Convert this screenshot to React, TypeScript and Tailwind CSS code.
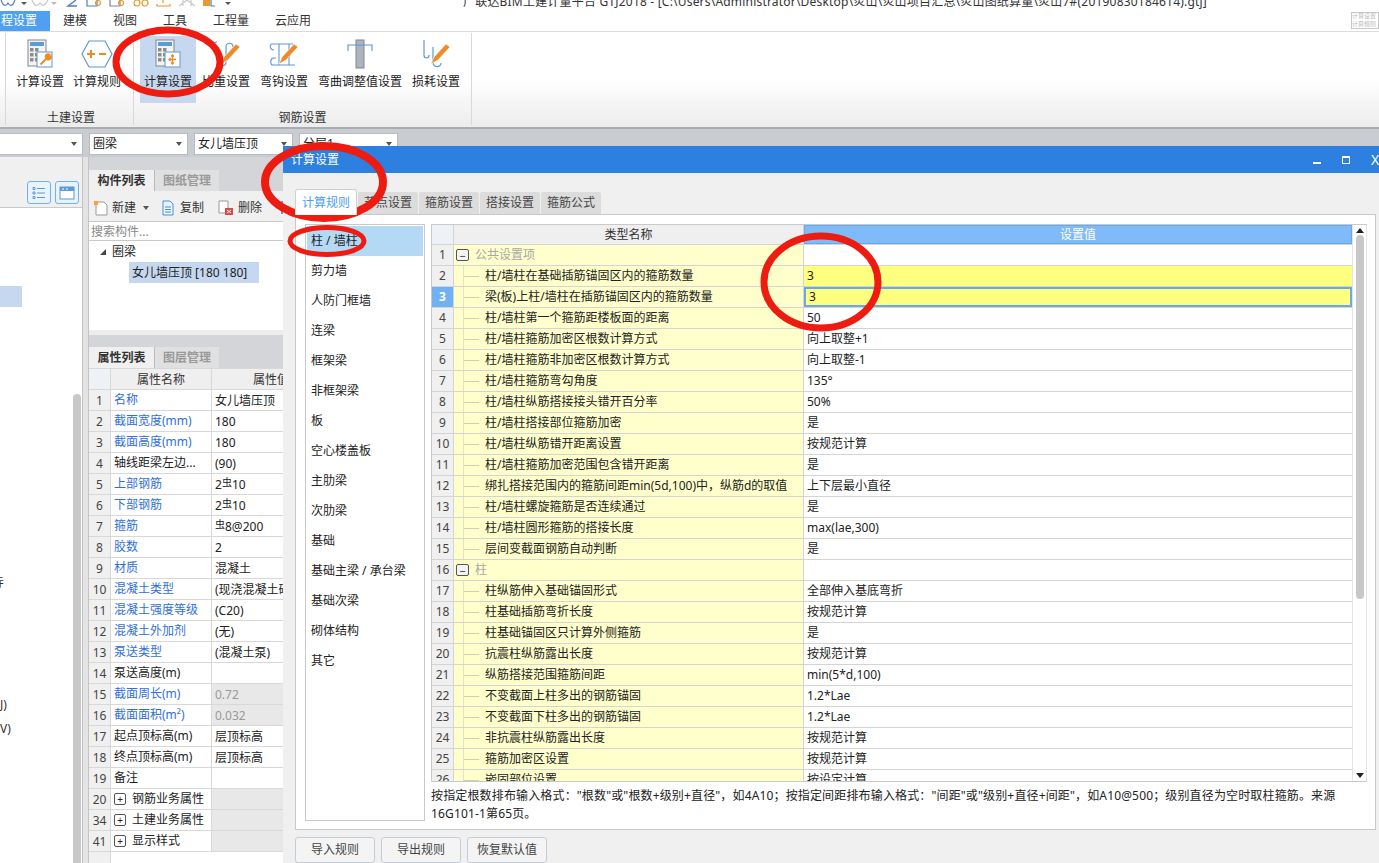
const menus = [
  { name: "建模", w: "w-[50px]" },
  { name: "视图", w: "w-[50px]" },
  { name: "工具", w: "w-[50px]" },
  { name: "工程量", w: "w-[62px]" },
  { name: "云应用", w: "w-[62px]" },
];

const props: { no: number; name: string; value: string; blue?: boolean; gray?: boolean; expand?: boolean; rebar?: string }[] = [
  { no: 1, name: "名称", value: "女儿墙压顶", blue: true },
  { no: 2, name: "截面宽度(mm)", value: "180", blue: true },
  { no: 3, name: "截面高度(mm)", value: "180", blue: true },
  { no: 4, name: "轴线距梁左边...", value: "(90)" },
  { no: 5, name: "上部钢筋", value: "10", blue: true, rebar: "2" },
  { no: 6, name: "下部钢筋", value: "10", blue: true, rebar: "2" },
  { no: 7, name: "箍筋", value: "8@200", blue: true, rebar: " " },
  { no: 8, name: "胶数", value: "2", blue: true },
  { no: 9, name: "材质", value: "混凝土", blue: true },
  { no: 10, name: "混凝土类型", value: "(现浇混凝土碎石", blue: true },
  { no: 11, name: "混凝土强度等级", value: "(C20)", blue: true },
  { no: 12, name: "混凝土外加剂", value: "(无)", blue: true },
  { no: 13, name: "泵送类型", value: "(混凝土泵)", blue: true },
  { no: 14, name: "泵送高度(m)", value: "" },
  { no: 15, name: "截面周长(m)", value: "0.72", blue: true, gray: true },
  { no: 16, name: "截面面积(m²)", value: "0.032", blue: true, gray: true },
  { no: 17, name: "起点顶标高(m)", value: "层顶标高" },
  { no: 18, name: "终点顶标高(m)", value: "层顶标高" },
  { no: 19, name: "备注", value: "" },
  { no: 20, name: "钢筋业务属性", value: "", expand: true, gray: true },
  { no: 34, name: "土建业务属性", value: "", expand: true, gray: true },
  { no: 41, name: "显示样式", value: "", expand: true, gray: true },
];

const categories = ["柱 / 墙柱", "剪力墙", "人防门框墙", "连梁", "框架梁", "非框架梁", "板", "空心楼盖板", "主肋梁", "次肋梁", "基础", "基础主梁 / 承台梁", "基础次梁", "砌体结构", "其它"];

const rules: { name: string; value: string; group?: boolean }[] = [
  { name: "公共设置项", value: "", group: true },
  { name: "柱/墙柱在基础插筋锚固区内的箍筋数量", value: "3" },
  { name: "梁(板)上柱/墙柱在插筋锚固区内的箍筋数量", value: "3" },
  { name: "柱/墙柱第一个箍筋距楼板面的距离", value: "50" },
  { name: "柱/墙柱箍筋加密区根数计算方式", value: "向上取整+1" },
  { name: "柱/墙柱箍筋非加密区根数计算方式", value: "向上取整-1" },
  { name: "柱/墙柱箍筋弯勾角度", value: "135°" },
  { name: "柱/墙柱纵筋搭接接头错开百分率", value: "50%" },
  { name: "柱/墙柱搭接部位箍筋加密", value: "是" },
  { name: "柱/墙柱纵筋错开距离设置", value: "按规范计算" },
  { name: "柱/墙柱箍筋加密范围包含错开距离", value: "是" },
  { name: "绑扎搭接范围内的箍筋间距min(5d,100)中，纵筋d的取值", value: "上下层最小直径" },
  { name: "柱/墙柱螺旋箍筋是否连续通过", value: "是" },
  { name: "柱/墙柱圆形箍筋的搭接长度", value: "max(lae,300)" },
  { name: "层间变截面钢筋自动判断", value: "是" },
  { name: "柱", value: "", group: true },
  { name: "柱纵筋伸入基础锚固形式", value: "全部伸入基底弯折" },
  { name: "柱基础插筋弯折长度", value: "按规范计算" },
  { name: "柱基础锚固区只计算外侧箍筋", value: "是" },
  { name: "抗震柱纵筋露出长度", value: "按规范计算" },
  { name: "纵筋搭接范围箍筋间距", value: "min(5*d,100)" },
  { name: "不变截面上柱多出的钢筋锚固", value: "1.2*Lae" },
  { name: "不变截面下柱多出的钢筋锚固", value: "1.2*Lae" },
  { name: "非抗震柱纵筋露出长度", value: "按规范计算" },
  { name: "箍筋加密区设置", value: "按规范计算" },
  { name: "嵌固部位设置", value: "按设定计算" },
];

function QuickAccess() {
  return (
    <svg width="240" height="11" viewBox="0 0 240 11" fill="none" className="shrink-0">
      <path d="M1 0c2 6 5 7 7 3 2 4 5 3 7-3" stroke="#5a83b8" strokeWidth="1.2" />
      <path d="M21 2l3 3 3-3z" fill="#555" />
      <path d="M32 0c2 6 5 7 8 3 2 4 5 3 8-3" stroke="#c9c9c9" strokeWidth="1.2" />
      <path d="M51 2l3 3 3-3z" fill="#bbb" />
      <path d="M76 0l-8 6h9" stroke="#4a7fc4" strokeWidth="1.4" />
      <path d="M87 0v6h10V0" stroke="#4a7fc4" strokeWidth="1.2" />
      <circle cx="98" cy="3" r="2.500" stroke="#e8982e" strokeWidth="1.2" />
      <path d="M110 0v6h10V0" stroke="#7d8794" strokeWidth="1.2" />
      <circle cx="121" cy="3" r="2.500" stroke="#e8982e" strokeWidth="1.2" />
      <circle cx="137" cy="3" r="3" stroke="#e8982e" strokeWidth="1.2" />
      <circle cx="145" cy="3" r="3" stroke="#e8982e" strokeWidth="1.2" />
      <path d="M163 0v3M157 4v2h13V4" stroke="#e8982e" strokeWidth="1.2" />
      <path d="M179 6l8-6 8 6M183 0v6M191 0v6" stroke="#c9c9c9" strokeWidth="1.2" />
      <rect x="203" y="0" width="7" height="6" fill="#e8982e" />
      <path d="M211 0v6h4" stroke="#4a7fc4" strokeWidth="1.2" />
      <path d="M225 2l3 3 3-3z" fill="#555" />
    </svg>
  );
}

function CalcIcon({ badge }: { badge: "wrench" | "arrows" }) {
  return (
    <svg width="26" height="30" viewBox="0 0 26 30">
      <rect x="1" y="1" width="18" height="26" fill="#f4f4f4" stroke="#7d8794" />
      <rect x="3" y="3" width="14" height="4" fill="#5d9ad8" />
      {[9, 14, 19].map((y) => (
        <g key={y} fill="#8c8c8c">
          <rect x="3" y={y} width="3.500" height="3.500" />
          <rect x="8" y={y} width="3.500" height="3.500" />
        </g>
      ))}
      <rect x="10" y="13" width="15" height="15" fill="#fff" stroke="#5d9ad8" />
      {badge === "wrench" ? (
        <path d="M13.500 25.500l6-6M18.500 17.500c0-2 2.500-3 4-2l-2 2 1.500 1.500 2-2c.5 2-1 4-3.500 3.500z" stroke="#ee8a22" strokeWidth="1.800" fill="#ee8a22" />
      ) : (
        <g fill="none" stroke="#ee8a22" strokeWidth="1.300">
          <path d="M17.500 16v9M14 20.500h7" />
          <path d="M16 17.500l1.500-1.500 1.500 1.500M16 23.500l1.500 1.500 1.500-1.500M15.500 19l-1.500 1.500 1.500 1.500" />
        </g>
      )}
    </svg>
  );
}

function RuleIcon() {
  return (
    <svg width="32" height="30" viewBox="0 0 32 30">
      <path d="M8 2h16l7 13-7 13H8L1 15z" fill="#fff" stroke="#5d9ad8" strokeWidth="1.200" />
      <path d="M6 15h8M10 11v8" stroke="#ee8a22" strokeWidth="2" />
      <path d="M18 15h7" stroke="#ee8a22" strokeWidth="2" />
    </svg>
  );
}

function Pencil() {
  return <path d="M10 25l3-7 12-13 4 3-12 13z" fill="#ef8a2c" stroke="#fff" strokeWidth="0.600" />;
}

function RatioIcon() {
  return (
    <svg width="30" height="30" viewBox="0 0 30 30">
      <path d="M6 3c-4 0-4 6 0 6h1v14c0 5 8 5 8 0V8c0-5 7-5 7 0" fill="none" stroke="#5d9ad8" strokeWidth="1.200" />
      <Pencil />
    </svg>
  );
}

function HookIcon() {
  return (
    <svg width="30" height="30" viewBox="0 0 30 30">
      <path d="M2 5h22M2 5c-2 3 0 6 3 6M4 26h22M4 26c-3 0-3-6 0-7h3M10 5v21M20 5v21" fill="none" stroke="#5d9ad8" strokeWidth="1.100" />
      <Pencil />
    </svg>
  );
}

function BendIcon() {
  return (
    <svg width="26" height="30" viewBox="0 0 26 30">
      <rect x="9" y="1" width="8" height="28" fill="#aeb4bb" stroke="#7d8794" />
      <path d="M1 12V6h24v6" fill="none" stroke="#5d9ad8" strokeWidth="1.200" />
    </svg>
  );
}

function LossIcon() {
  return (
    <svg width="30" height="30" viewBox="0 0 30 30">
      <path d="M3 1v15c0 4 5 4 5 0M12 8v15c0 6 8 6 8 1" fill="none" stroke="#5d9ad8" strokeWidth="1.200" />
      <Pencil />
    </svg>
  );
}

function RibbonButton({ label, icon, active, wide }: { label: string; icon: React.ReactNode; active?: boolean; wide?: boolean }) {
  return (
    <div className={`flex h-[67px] shrink-0 flex-col items-center pt-[2px] ${wide ? "w-[92px]" : "w-[56px]"} ${active ? "bg-[#c5d8ef]" : ""}`}>
      <div className="flex h-[31px] items-center">{icon}</div>
      <div className="mt-[5px] whitespace-nowrap text-xs leading-4 text-[#222]">{label}</div>
    </div>
  );
}

function Combo({ text, w }: { text: string; w: string }) {
  return (
    <div className={`flex h-[22px] shrink-0 items-center justify-between border border-[#b8bcc2] bg-white pl-[3px] pr-[5px] text-xs text-[#222] ${w}`}>
      <span>{text}</span>
      <span className="h-0 w-0 border-x-[3.5px] border-t-[4px] border-x-transparent border-t-[#555]" />
    </div>
  );
}

function PropertyRow({ row }: { row: (typeof props)[number] }) {
  return (
    <div className="flex h-[21px] shrink-0 border-b border-[#d8d8d8] text-xs leading-[22px]">
      <div className="w-[22px] shrink-0 border-r border-[#d8d8d8] bg-[#f0f0f0] text-center text-[#444]">{row.no}</div>
      <div className={`flex w-[101px] shrink-0 items-center border-r border-[#d8d8d8] bg-white pl-[3px] ${row.blue ? "text-[#2f6fdc]" : "text-[#222]"}`}>
        {row.expand && <span className="mr-[6px] flex h-3 w-3 items-center justify-center rounded-[2px] border border-[#555] text-[10px] leading-none">+</span>}
        {row.name}
      </div>
      <div className={`flex-1 overflow-hidden whitespace-nowrap pl-[3px] ${row.gray ? "bg-[#e8e8e8] text-[#999]" : "bg-white text-[#222]"}`}>
        {row.rebar !== undefined && (
          <>
            {row.rebar}
            <span className="relative top-[-3px] text-[10px]">虫</span>
          </>
        )}
        {row.value}
      </div>
    </div>
  );
}

function RuleRow({ no, rule }: { no: number; rule: (typeof rules)[number] }) {
  const selected = no === 3;
  const changed = no === 2 || no === 3;
  return (
    <div className="flex h-[21px] shrink-0 border-b border-[#d4d4d4] text-xs leading-5">
      <div className={`w-[22px] shrink-0 border-r border-[#d4d4d4] text-center ${selected ? "bg-[#6fb1f3] font-bold text-white" : "bg-[#f0f0f0] text-[#444]"}`}>{no}</div>
      {rule.group ? (
        <div className="flex w-[350px] shrink-0 items-center border-r border-[#d4d4d4] bg-[#ffffcc] pl-[2px] text-[#a8a8a8]">
          <span className="mr-[6px] flex h-3 w-[13px] items-center justify-center rounded-[2px] border border-[#555] bg-[#f4f4f4] text-[11px] leading-none text-[#333]">−</span>
          {rule.name}
        </div>
      ) : (
        <div className="flex w-[350px] shrink-0 items-center border-r border-[#d4d4d4] bg-[#ffffcc] pl-[9px] text-[#222]">
          <span className="mr-[6px] flex h-full w-4 items-center border-l border-[#e2e2c4]">
            <span className="h-px w-full bg-[#cfcfb8]" />
          </span>
          {rule.name}
        </div>
      )}
      <div className={`flex-1 pl-[3px] text-[#222] ${changed ? "bg-[#ffff80]" : "bg-white"} ${selected ? "border-2 border-[#6aa9e9] pl-[2px] leading-4" : ""}`}>{rule.value}</div>
    </div>
  );
}

export default function App() {
  return (
    <div className="relative h-[863px] w-[1379px] overflow-hidden bg-white font-['Noto_Sans','Noto_Sans_CJK_SC',sans-serif]">
      {/* title bar, cut off by the screenshot */}
      <div className="flex h-[11px] overflow-hidden bg-white">
        <div className="w-[463px] shrink-0">
          <QuickAccess />
        </div>
        <div className="-mt-[6px] whitespace-nowrap text-xs leading-4 tracking-[0.2px] text-[#333]">
          广联达BIM土建计量平台 GTJ2018 - [C:\Users\Administrator\Desktop\炎山\炎山项目汇总\炎山图纸算量\炎山7#(20190830184614).gtj]
        </div>
      </div>

      {/* menu */}
      <div className="flex h-[21px] items-end border-b border-[#dcdcdc] bg-white">
        <div className="flex h-[20px] w-[50px] items-center overflow-hidden bg-[#4f9ff2] pl-px text-xs whitespace-nowrap text-white">程设置</div>
        <div className="ml-[13px] flex h-[20px] items-center text-xs text-[#333]">
          {menus.map((m) => (
            <span key={m.name} className={m.w}>{m.name}</span>
          ))}
        </div>
        <div className="mb-[2px] ml-auto h-[17px] w-[28px] border border-[#c8c8c8] text-[6px] leading-[7px] whitespace-nowrap text-[#bbb]">
          <div className="overflow-hidden">计算设置</div>
          <div className="mt-px overflow-hidden">计算规则</div>
        </div>
      </div>

      {/* ribbon */}
      <div className="flex h-[97px] border-b-2 border-[#a9acb0] bg-gradient-to-b from-white via-white to-[#ececec]">
        <div className="ml-[5px] mt-px flex h-[92px] w-[129px] flex-col items-center border-x border-[#d8d8d8]">
          <div className="flex w-full gap-px pl-[6px] pt-[3px]">
            <RibbonButton label="计算设置" icon={<CalcIcon badge="wrench" />} />
            <RibbonButton label="计算规则" icon={<RuleIcon />} />
          </div>
          <div className="mt-[7px] pl-[3px] text-xs leading-4 text-[#333]">土建设置</div>
        </div>
        <div className="mt-px flex h-[92px] w-[338px] flex-col items-center border-r border-[#d8d8d8]">
          <div className="flex w-full gap-[2px] pl-[6px] pt-[3px]">
            <RibbonButton label="计算设置" icon={<CalcIcon badge="arrows" />} active />
            <RibbonButton label="比重设置" icon={<RatioIcon />} />
            <RibbonButton label="弯钩设置" icon={<HookIcon />} />
            <RibbonButton label="弯曲调整值设置" icon={<BendIcon />} wide />
            <RibbonButton label="损耗设置" icon={<LossIcon />} />
          </div>
          <div className="mt-[7px] text-xs leading-4 text-[#333]">钢筋设置</div>
        </div>
      </div>

      {/* combos */}
      <div className="flex h-[28px] items-center gap-[6px] bg-[#c9ccd1] pt-[2px]">
        <Combo text="" w="-ml-px w-[84px]" />
        <Combo text="圈梁" w="w-[99px]" />
        <Combo text="女儿墙压顶" w="w-[99px]" />
        <Combo text="分层1" w="w-[99px]" />
      </div>

      {/* body */}
      <div className="flex h-[706px] bg-[#c9ccd1]">
        <div className="flex w-[83px] shrink-0 flex-col border-r border-[#c4c4c4] bg-white">
          <div className="flex h-[51px] shrink-0 items-end justify-end gap-[4px] border-b border-[#c9c9c9] bg-[#f0f0f0] pb-[3px] pr-[3px]">
            <div className="flex h-[23px] w-[24px] items-center justify-center rounded-[3px] border border-[#6db3f2] bg-[#e9f3fd]">
              <svg width="14" height="14" viewBox="0 0 14 14" fill="none" stroke="#5d9ad8">
                <path d="M5 2.500h8M5 7h8M5 11.500h8M1 1.500h2v2H1zM1 6h2v2H1zM1 10.500h2v2H1z" />
              </svg>
            </div>
            <div className="flex h-[23px] w-[24px] items-center justify-center rounded-[3px] border border-[#6db3f2] bg-[#e9f3fd]">
              <svg width="16" height="14" viewBox="0 0 16 14">
                <rect x="1" y="1" width="14" height="12" fill="#fff" stroke="#5d9ad8" />
                <rect x="1" y="1" width="14" height="4" fill="#5d9ad8" />
                <path d="M3 3h2M7 3h2" stroke="#fff" />
              </svg>
            </div>
          </div>
          <div className="relative flex-1 overflow-hidden">
            <div className="mt-[78px] h-[21px] w-[22px] bg-[#c5d8ef]" />
            <div className="absolute bottom-0 left-[73px] h-[469px] w-[8px] rounded-t bg-[#c8c8c8]" />
            <div className="absolute left-[-8px] top-[367px] text-xs text-[#333]">寺</div>
            <div className="absolute left-0 top-[489px] text-xs text-[#333]">J)</div>
            <div className="absolute left-0 top-[513px] text-xs text-[#333]">V)</div>
          </div>
        </div>
        <div className="w-[5px] shrink-0 bg-[#e4e4e4]" />
        <div className="flex w-[195px] shrink-0 flex-col border-l border-[#c4c4c4] bg-[#f0f0f0]">
          <div className="h-[13px] shrink-0 bg-[#d3d5d8]" />
          <div className="flex h-[21px] shrink-0 bg-[#d3d5d8] text-xs leading-[21px]">
            <div className="w-[65px] bg-[#f0f0f0] text-center font-bold text-[#333]">构件列表</div>
            <div className="w-[65px] border-l border-[#bbb] bg-[#e0e0e0] text-center font-bold text-[#999]">图纸管理</div>
          </div>
          <div className="flex h-[31px] shrink-0 items-center overflow-hidden border-b border-[#c9c9c9] pt-[3px] text-xs text-[#333]">
            <svg width="16" height="16" viewBox="0 0 16 16" className="ml-[4px] shrink-0">
              <path d="M3 2h8l3 3v10H3z" fill="#fff" stroke="#999" />
              <rect x="1" y="1" width="4" height="4" fill="#f2a33a" />
            </svg>
            <span className="ml-[3px]">新建</span>
            <span className="ml-[7px] h-0 w-0 border-x-[3px] border-t-[4px] border-x-transparent border-t-[#555]" />
            <svg width="14" height="16" viewBox="0 0 14 16" className="ml-[12px] shrink-0">
              <path d="M2 1h7l3 3v11H2z" fill="#e9f3fd" stroke="#4a8fd6" />
              <path d="M4 7h6M4 9.500h6M4 12h6" stroke="#4a8fd6" />
            </svg>
            <span className="ml-[5px]">复制</span>
            <svg width="16" height="16" viewBox="0 0 16 16" className="ml-[14px] shrink-0">
              <path d="M1 1h9v12H1z" fill="#fff" stroke="#999" />
              <rect x="7" y="8" width="8" height="7" fill="#d84a4a" />
              <path d="M9 10l4 3M13 10l-4 3" stroke="#fff" />
            </svg>
            <span className="ml-[4px]">删除</span>
            <span className="ml-[19px] h-[13px] w-[2px] shrink-0 bg-[#5d9ad8]" />
          </div>
          <div className="h-[19px] shrink-0 border-b border-[#c9c9c9] bg-white pl-[2px] text-xs leading-5 text-[#888]">搜索构件...</div>
          <div className="h-[89px] shrink-0 bg-white pl-[11px] text-xs text-[#222]">
            <div className="flex h-[21px] items-center">
              <span className="h-0 w-0 border-b-[6px] border-l-[6px] border-b-[#444] border-l-transparent" />
              <span className="ml-[6px]">圈梁</span>
            </div>
            <div className="ml-[29px] h-[21px] w-[130px] bg-[#c5d8ef] pl-[3px] leading-[21px]">女儿墙压顶 [180 180]</div>
          </div>
          <div className="h-[5px] shrink-0 bg-[#ececec]" />
          <div className="h-[12px] shrink-0 bg-[#d3d5d8]" />
          <div className="flex h-[22px] shrink-0 border-b border-[#d8d8d8] bg-[#d3d5d8] text-xs leading-[21px]">
            <div className="w-[65px] bg-[#f0f0f0] text-center font-bold text-[#333]">属性列表</div>
            <div className="w-[65px] border-l border-[#bbb] bg-[#e0e0e0] text-center font-bold text-[#999]">图层管理</div>
          </div>
          <div className="flex h-[21px] shrink-0 border-b border-[#d8d8d8] text-xs leading-[22px] text-[#333]">
            <div className="w-[22px] border-r border-[#d8d8d8] bg-[#eef1f5]" />
            <div className="w-[101px] border-r border-[#d8d8d8] bg-[#efefef] text-center">属性名称</div>
            <div className="flex-1 overflow-hidden whitespace-nowrap bg-[#efefef] pl-[41px]">属性值</div>
          </div>
          {props.map((row) => (
            <PropertyRow key={row.no} row={row} />
          ))}
          <div className="flex flex-1">
            <div className="w-[22px] border-r border-[#d8d8d8] bg-[#f0f0f0]" />
            <div className="flex-1 bg-white" />
          </div>
        </div>
      </div>

      {/* calculation settings dialog */}
      <div className="absolute left-[283px] top-[146px] flex h-[717px] w-[1096px] flex-col bg-[#f0f0f0]">
        <div className="flex h-[27px] shrink-0 items-center bg-[#2d7fe0] pl-[8px] text-xs text-white">
          计算设置
          <div className="ml-auto flex items-center gap-[21px]">
            <span className="mt-[6px] h-[2px] w-2 bg-white" />
            <span className="h-2 w-2 border border-t-2 border-white" />
            <span className="w-[8px] overflow-hidden text-sm leading-none">X</span>
          </div>
        </div>
        <div className="flex h-[41px] shrink-0 items-end pl-[12px] text-xs">
          <div className="relative z-10 -mb-px flex h-[26px] w-[62px] items-center justify-center rounded-t-[3px] border border-b-0 border-[#d0d0d0] bg-white text-[#4a9df0]">计算规则</div>
          <div className="ml-px flex gap-px text-[#444]">
            {["节点设置", "箍筋设置", "搭接设置", "箍筋公式"].map((t) => (
              <div key={t} className="flex h-[22px] w-[60px] items-center justify-center rounded-t-[2px] bg-[#dcdcdc]">{t}</div>
            ))}
          </div>
        </div>
        <div className="ml-[12px] flex h-[616px] w-[1081px] shrink-0 gap-[6px] border border-[#c9c9c9] bg-white pl-[9px] pt-[9px]">
          <div className="h-[597px] w-[120px] shrink-0 border border-[#c9c9c9] p-px text-xs text-[#222]">
            {categories.map((c, i) => (
              <div key={c} className={`flex h-[30px] items-center whitespace-nowrap pl-[4px] ${i === 0 ? "bg-[#b3d9f5]" : ""}`}>{c}</div>
            ))}
          </div>
          <div className="flex w-[936px] shrink-0 flex-col">
            <div className="flex h-[558px] shrink-0 overflow-hidden border-y border-l border-[#c9c9c9]">
              <div className="flex w-[920px] shrink-0 flex-col overflow-hidden">
                <div className="flex h-[20px] shrink-0 border-b border-[#d4d4d4] text-xs leading-5">
                  <div className="w-[22px] shrink-0 border-r border-[#d4d4d4] bg-[#eef1f5]" />
                  <div className="w-[350px] shrink-0 border-r border-[#d4d4d4] bg-[#efefef] text-center text-[#333]">类型名称</div>
                  <div className="flex-1 border border-[#6aa9e9] bg-[#7fbbf9] text-center leading-[18px] text-white">设置值</div>
                </div>
                {rules.map((rule, i) => (
                  <RuleRow key={i} no={i + 1} rule={rule} />
                ))}
              </div>
              <div className="flex w-[15px] shrink-0 flex-col items-center border-x border-[#e4e4e4] pt-[3px]">
                <span className="h-0 w-0 border-x-[4px] border-b-[5px] border-x-transparent border-b-[#222]" />
                <span className="mt-[2px] h-[364px] w-[8px] rounded bg-[#c8c8c8]" />
                <span className="mb-[3px] mt-auto h-0 w-0 border-x-[4px] border-t-[5px] border-x-transparent border-t-[#222]" />
              </div>
            </div>
            <div className="pt-[5px] text-xs leading-[18px] tracking-[0.15px] text-[#222]">
              按指定根数排布输入格式："根数"或"根数+级别+直径"，如4A10；按指定间距排布输入格式："间距"或"级别+直径+间距"，如A10@500；级别直径为空时取柱箍筋。来源
              <br />
              16G101-1第65页。
            </div>
          </div>
        </div>
        <div className="ml-[12px] mt-[7px] flex gap-[6px] text-xs text-[#444]">
          {["导入规则", "导出规则", "恢复默认值"].map((t) => (
            <div key={t} className="flex h-[26px] w-[80px] items-center justify-center rounded-[3px] border border-[#c6ccd6] bg-[#f4f4f4]">{t}</div>
          ))}
        </div>
      </div>

      {/* red hand-drawn marks on top of the screenshot */}
      <svg className="pointer-events-none absolute inset-0" width="1379" height="863" fill="none" stroke="#ee1c10">
        <ellipse cx="168" cy="62" rx="52" ry="32" strokeWidth="7" />
        <ellipse cx="324" cy="182" rx="59" ry="36" strokeWidth="8" />
        <ellipse cx="327" cy="241" rx="37" ry="13.500" strokeWidth="5" />
        <ellipse cx="821" cy="282" rx="57" ry="46" strokeWidth="7" />
      </svg>
    </div>
  );
}
